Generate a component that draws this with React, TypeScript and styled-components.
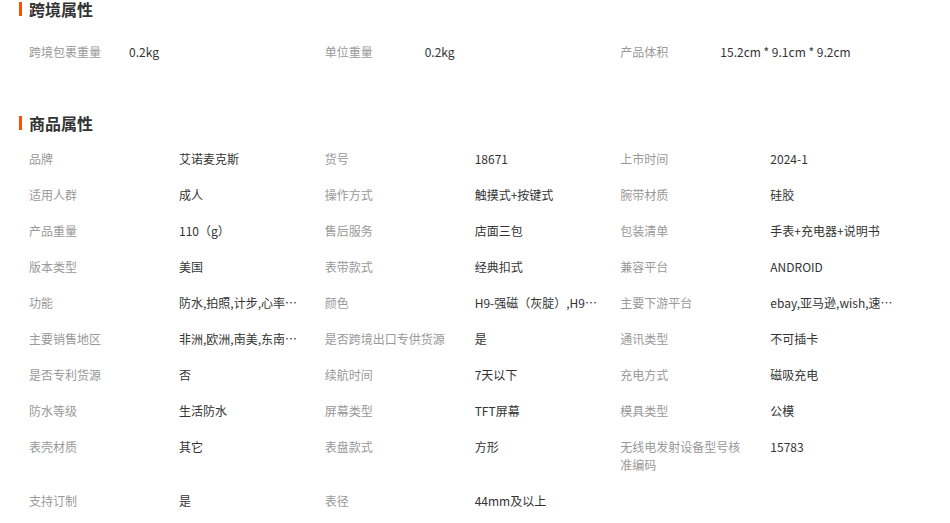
import React from "react";
import styled, { createGlobalStyle } from "styled-components";

const Global = createGlobalStyle`
  html, body { margin: 0; padding: 0; background: #fff; }
  body { font-family: "Noto Sans CJK SC", "Liberation Sans", sans-serif; font-size: 12px; color: #333; }
  ul { list-style: none; margin: 0; padding: 0; }
`;

const Page = styled.div`
  padding-left: 19px;
  width: 900px;
`;

const Section = styled.section<{ $gap?: number }>`
  margin-top: ${(p) => p.$gap ?? 0}px;
`;

const Title = styled.h3<{ $below: number }>`
  display: flex;
  align-items: center;
  height: 18px;
  margin: 0 0 ${(p) => p.$below}px 0;
  font-size: 16px;
  font-weight: bold;
  color: #333;
  line-height: 18px;
  &::before {
    content: "";
    display: block;
    width: 3px;
    height: 14px;
    background: #ff5000;
    margin-right: 7px;
  }
`;

const Grid = styled.ul`
  display: grid;
  grid-template-columns: repeat(3, 1fr);
  width: 887px;
  padding-left: 10px;
`;

const Cell = styled.li<{ $label: number }>`
  display: grid;
  grid-template-columns: ${(p) => p.$label}px 1fr;
  padding: 9px 0;
  line-height: 18px;
`;

const Label = styled.span`
  color: #999;
  max-width: 125px;
`;

const Value = styled.span<{ $max?: number }>`
  color: #333;
  max-width: ${(p) => (p.$max ? `${p.$max}px` : "none")};
  white-space: nowrap;
  overflow: hidden;
  text-overflow: ellipsis;
`;

const cross: [string, string][] = [
  ["跨境包裹重量", "0.2kg"],
  ["单位重量", "0.2kg"],
  ["产品体积", "15.2cm * 9.1cm * 9.2cm"],
];

const attrs: [string, string][] = [
  ["品牌", "艾诺麦克斯"],
  ["货号", "18671"],
  ["上市时间", "2024-1"],
  ["适用人群", "成人"],
  ["操作方式", "触摸式+按键式"],
  ["腕带材质", "硅胶"],
  ["产品重量", "110（g）"],
  ["售后服务", "店面三包"],
  ["包装清单", "手表+充电器+说明书"],
  ["版本类型", "美国"],
  ["表带款式", "经典扣式"],
  ["兼容平台", "ANDROID"],
  ["功能", "防水,拍照,计步,心率监测,睡眠监测"],
  ["颜色", "H9-强磁（灰腚）,H9-强磁（黑色）"],
  ["主要下游平台", "ebay,亚马逊,wish,速卖通"],
  ["主要销售地区", "非洲,欧洲,南美,东南亚,北美"],
  ["是否跨境出口专供货源", "是"],
  ["通讯类型", "不可插卡"],
  ["是否专利货源", "否"],
  ["续航时间", "7天以下"],
  ["充电方式", "磁吸充电"],
  ["防水等级", "生活防水"],
  ["屏幕类型", "TFT屏幕"],
  ["模具类型", "公模"],
  ["表壳材质", "其它"],
  ["表盘款式", "方形"],
  ["无线电发射设备型号核准编码", "15783"],
  ["支持订制", "是"],
  ["表径", "44mm及以上"],
];

export default function App() {
  return (
    <>
      <Global />
      <Page>
        <Section>
          <Title $below={16}>跨境属性</Title>
          <Grid>
            {cross.map(([k, v]) => (
              <Cell key={k} $label={100}>
                <Label>{k}</Label>
                <Value>{v}</Value>
              </Cell>
            ))}
          </Grid>
        </Section>
        <Section $gap={44}>
          <Title $below={9}>商品属性</Title>
          <Grid>
            {attrs.map(([k, v]) => (
              <Cell key={k} $label={150}>
                <Label>{k}</Label>
                <Value $max={124}>{v}</Value>
              </Cell>
            ))}
          </Grid>
        </Section>
      </Page>
    </>
  );
}
